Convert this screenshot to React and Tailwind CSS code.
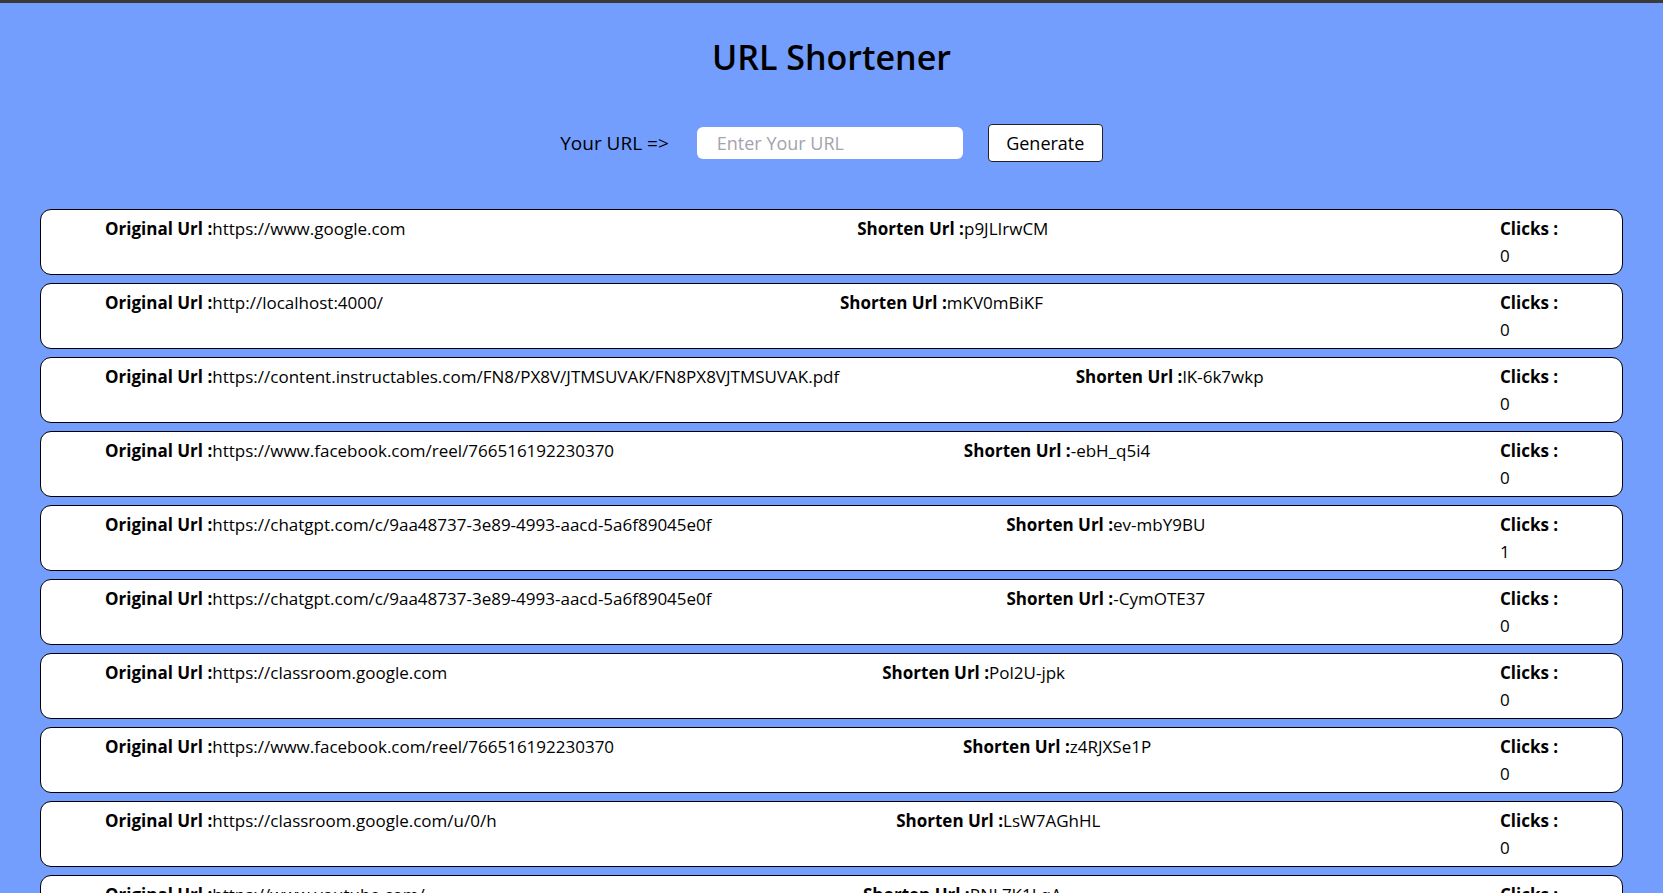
import React from "react";

const rows = [
  ["https://www.google.com", "p9JLIrwCM", "0"],
  ["http://localhost:4000/", "mKV0mBiKF", "0"],
  ["https://content.instructables.com/FN8/PX8V/JTMSUVAK/FN8PX8VJTMSUVAK.pdf", "lK-6k7wkp", "0"],
  ["https://www.facebook.com/reel/766516192230370", "-ebH_q5i4", "0"],
  ["https://chatgpt.com/c/9aa48737-3e89-4993-aacd-5a6f89045e0f", "ev-mbY9BU", "1"],
  ["https://chatgpt.com/c/9aa48737-3e89-4993-aacd-5a6f89045e0f", "-CymOTE37", "0"],
  ["https://classroom.google.com", "Pol2U-jpk", "0"],
  ["https://www.facebook.com/reel/766516192230370", "z4RJXSe1P", "0"],
  ["https://classroom.google.com/u/0/h", "LsW7AGhHL", "0"],
  ["https://www.youtube.com/", "RNL7K1LqA", "0"],
];

export default function App() {
  return (
    <div
      className="h-screen overflow-hidden bg-[#739efe] border-t-[3px] border-[#3a3a3a] text-black"
      style={{ fontFamily: '"Open Sans", "Noto Sans", sans-serif' }}
    >
      <h1 className="text-center text-[34px] font-semibold leading-[44px] pt-[32px]">
        URL Shortener
      </h1>
      <div className="flex items-center justify-center mt-[45px] text-[18px]">
        <span className="mr-[28px] text-[19px]">Your URL =&gt;</span>
        <input
          type="text"
          placeholder="Enter Your URL"
          className="w-[266px] h-[32px] bg-white rounded-[6px] pl-[20px] text-[18px] outline-none placeholder:text-[#a3a3ad]"
        />
        <button className="ml-[25px] w-[115px] h-[38px] bg-white border border-[#222] rounded-[4px] text-[18px]">
          Generate
        </button>
      </div>
      <div className="mt-[47px] mx-[40px] flex flex-col gap-[8px]">
        {rows.map((r, i) => (
          <div
            key={i}
            className="bg-white border border-black rounded-[11px] h-[66px] shrink-0 px-[64px] pt-[7px] flex justify-between items-start text-[17px] leading-[24px]"
          >
            <div className="whitespace-nowrap">
              <span className="font-bold">Original Url :</span>
              {r[0]}
            </div>
            <div className="whitespace-nowrap">
              <span className="font-bold">Shorten Url :</span>
              {r[1]}
            </div>
            <div className="flex flex-col gap-[3px] w-[58px] whitespace-nowrap">
              <span className="font-bold">Clicks :</span>
              <span>{r[2]}</span>
            </div>
          </div>
        ))}
      </div>
    </div>
  );
}
